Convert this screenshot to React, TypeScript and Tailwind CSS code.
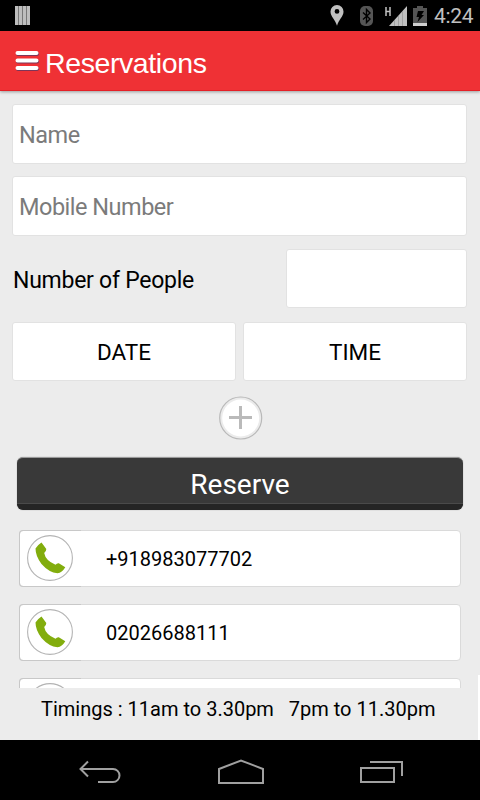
import React from 'react';

const phones = ['+918983077702', '02026688111', ''];

const StatusBar: React.FC = () => (
  <div className="flex h-[31px] shrink-0 items-center justify-between bg-black">
    <svg className="ml-[15px]" width="15" height="19" viewBox="0 0 15 19">
      <path d="M0 0h15v19H0z" fill="#777" />
      <path d="M0 0h3v19H0zM4 0h3v19H4zM8 0h3v19H8zM12 0h3v19h-3z" fill="#bdbdbd" />
    </svg>
    <div className="flex items-center pr-[7px]">
      {/* Location */}
      <svg width="14" height="21" viewBox="0 0 14 21">
        <path d="M7 0a6.500 6.500 0 0 0-6.500 6.700C.5 11.500 5.500 14.500 7 20.800 8.500 14.500 13.500 11.500 13.500 6.700A6.500 6.500 0 0 0 7 0zm0 4a2.400 2.400 0 1 1 0 4.800A2.400 2.400 0 0 1 7 4z" fill="#c0c0c0" />
      </svg>
      {/* Bluetooth */}
      <svg className="ml-4" width="13" height="20" viewBox="0 0 13 20">
        <rect width="13" height="20" rx="5" fill="#555" />
        <path d="M3 6.500l7 6.500-3.500 3.500v-13L10 7l-7 6.500" fill="none" stroke="#000" strokeWidth="1.400" />
      </svg>
      {/* Signal */}
      <svg className="ml-3" width="22" height="20" viewBox="0 0 22 20">
        <path d="M1 1v9M5 1v9M1 5.500h4" stroke="#c0c0c0" strokeWidth="1.500" fill="none" />
        <path d="M22 0v20H4z" fill="#c0c0c0" />
        <path d="M9.500 14v6M13.500 10v10M17.500 5v15" stroke="#999" strokeWidth="0.800" />
      </svg>
      {/* Battery */}
      <svg className="ml-[6px]" width="14" height="20" viewBox="0 0 14 20">
        <path d="M4 0h6v2h4v15H0V2h4z" fill="#555" />
        <path d="M0 17h14v3H0z" fill="#d0d0d0" />
        <path d="M5 5h6L8.500 9H11l-6.500 7 1.500-5H3.500z" fill="#000" />
      </svg>
      <span className="ml-[7px] w-[39px] pt-px text-[21px] leading-[30px] tracking-[-0.3px] whitespace-nowrap text-[#c0c0c0]">4:24</span>
    </div>
  </div>
);

const MenuIcon: React.FC = () => (
  <svg className="mt-px" width="24" height="22" viewBox="0 0 24 22">
    <path d="M3 4h19M3 11.500h19M3 19h19" stroke="#7c3659" strokeWidth="4" strokeLinecap="round" />
    <path d="M2.500 3h19M2.500 10.500h19M2.500 18h19" stroke="#fff" strokeWidth="4" strokeLinecap="round" />
  </svg>
);

const PhoneRow: React.FC<{ phone: string }> = ({ phone }) => (
  <div className="flex h-[57px] shrink-0 items-center rounded-[4px] border border-[#dadada] bg-white">
    {/* Icon tile, its edge is a little darker than the row's */}
    <div className="-my-px -ml-px flex h-[57px] w-[62px] shrink-0 items-start rounded-l-[4px] border-y border-l border-[#c8c8c8] pt-[4px] pl-[7px]">
      <svg width="46" height="46" viewBox="0 0 46 46">
        <circle cx="23" cy="23" r="22.400" fill="#fff" stroke="#b4b4b4" strokeWidth="1.100" />
        <path
          d="M14.500 7.500 L19.300 14 Q19.200 16.500 17.200 18 Q18.500 25.500 28.500 29.800 Q30 27.800 31.800 28.200 L38.300 32.300 Q35 37.800 30.500 38.300 Q22 37.500 14.500 29 Q8.500 21 8.500 13.500 Q10.500 10 14.500 7.500z"
          fill="#82ad0d"
        />
      </svg>
    </div>
    <span className="ml-[25px] text-[20px] leading-6 whitespace-nowrap">{phone}</span>
  </div>
);

const NavBar: React.FC = () => (
  <div className="flex h-[60px] shrink-0 items-center justify-between bg-black pt-[3px] pr-[77px] pl-[79px]">
    <svg width="42" height="24" viewBox="0 0 42 24" fill="none" stroke="#a0a0a0" strokeWidth="2">
      <path d="M9 1.500L1.500 9l7.500 7.500M1.500 9H34a6.500 6.500 0 0 1 0 13H19" />
    </svg>
    <svg className="mr-[1px] mb-px ml-[1px]" width="46" height="25" viewBox="0 0 46 25" fill="none" stroke="#a0a0a0" strokeWidth="2">
      <path d="M1 10L23 1.500l22 8.500v14H1z" />
    </svg>
    <svg width="43" height="24" viewBox="0 0 43 24" fill="none" stroke="#a0a0a0" strokeWidth="2">
      <path d="M1 8h33v14H1zM10 2h32v14" />
    </svg>
  </div>
);

export default function App() {
  return (
    <div className="flex h-[800px] w-[480px] flex-col overflow-hidden bg-[#ececec] font-[Roboto,sans-serif] text-black">
      <StatusBar />

      {/* Header */}
      <header className="flex h-[60px] shrink-0 items-center gap-[5px] border-b border-[#e51f26] bg-[#ef3135] pl-[15px] shadow-[0_1px_3px_rgba(0,0,0,0.35)]">
        <MenuIcon />
        <h1 className="pt-[5px] pl-px font-['Liberation_Sans',sans-serif] text-[28.5px] leading-8 tracking-[-0.4px] text-white">Reservations</h1>
      </header>

      <main className="relative flex h-[597px] shrink-0 flex-col overflow-hidden px-3 pt-[13px]">
        <div className="h-[60px] w-[455px] shrink-0 rounded-[3px] border border-[#e2e2e2] bg-white pl-[6px] text-[23.500px] leading-[61px] tracking-[-0.5px] text-[#7b7b7b]">Name</div>
        <div className="mt-[12px] h-[60px] w-[455px] shrink-0 rounded-[3px] border border-[#e2e2e2] bg-white pl-[6px] text-[23.500px] leading-[61px] tracking-[-0.5px] text-[#7b7b7b]">Mobile Number</div>

        <div className="mt-[13px] flex h-[59px] w-[455px] shrink-0 items-center justify-between">
          <span className="pt-[3px] pl-px text-[23px] leading-[59px] tracking-[-0.25px]">Number of People</span>
          <div className="h-[59px] w-[181px] rounded-[3px] border border-[#e2e2e2] bg-white" />
        </div>

        <div className="mt-[14px] flex w-[455px] shrink-0 gap-[7px] text-center text-[22.5px] leading-[59px]">
          <div className="h-[59px] flex-1 rounded-[3px] border border-[#e2e2e2] bg-white">DATE</div>
          <div className="h-[59px] flex-1 rounded-[3px] border border-[#e2e2e2] bg-white">TIME</div>
        </div>

        <svg className="mt-[15px] ml-[207px] shrink-0" width="44" height="44" viewBox="0 0 44 44">
          <circle cx="21.700" cy="22" r="21" fill="#ebebeb" stroke="#b9b9b9" strokeWidth="1.200" />
          <circle cx="21.700" cy="22" r="18.500" fill="#fff" />
          <path d="M10 21.500h23M21.500 10v23" stroke="#bababa" strokeWidth="3" />
        </svg>

        <button className="mt-[17px] ml-[5px] h-[53px] w-[446px] shrink-0 rounded-[6px] border-t border-b-[6px] border-t-[#999] border-b-[#252525] bg-[#393939] pt-[2px] text-[28px] leading-[50px] text-white shadow-[inset_0_-1px_0_#4a4a4a,0_0_1px_#777]">
          Reserve
        </button>

        {/* Phone numbers */}
        <div className="mt-[20px] ml-[7px] flex w-[442px] flex-col gap-[17px]">
          {phones.map((phone, i) => (
            <PhoneRow key={i} phone={phone} />
          ))}
        </div>
        <div className="absolute right-0 bottom-0 h-[13px] w-[2px] bg-white" />
      </main>

      <footer className="flex h-[52px] shrink-0 justify-between">
        <p className="pl-[41px] text-[20px] leading-[42px] whitespace-pre">{'Timings : 11am to 3.30pm   7pm to 11.30pm'}</p>
        <div className="w-[2px] bg-white" />
      </footer>

      <NavBar />
    </div>
  );
}
